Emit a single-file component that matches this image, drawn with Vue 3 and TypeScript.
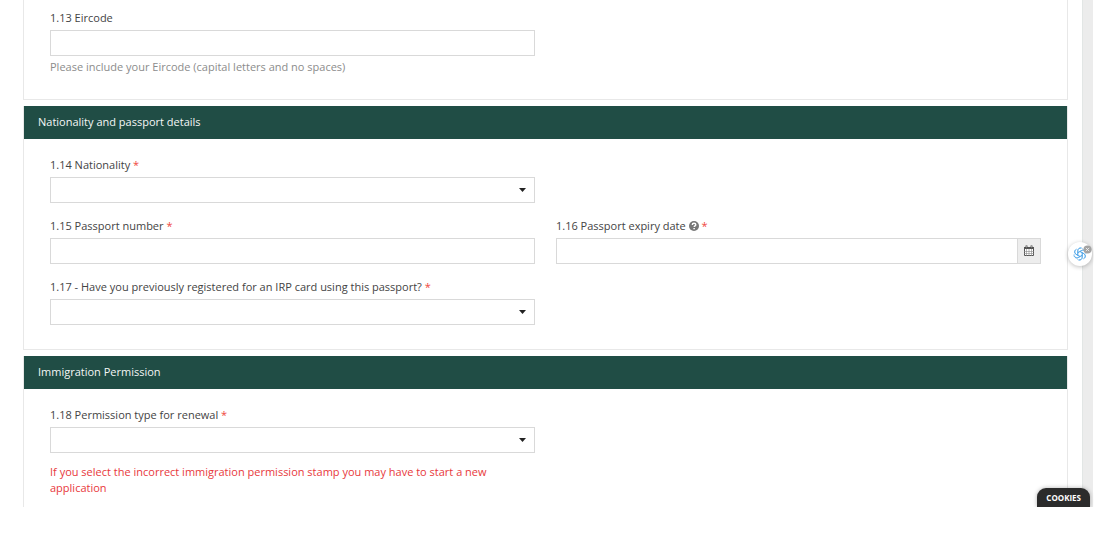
<script setup lang="ts">
import { ref } from 'vue'

const eircode = ref('')
const nationality = ref('')
const passportNumber = ref('')
const passportExpiry = ref('')
const registered = ref('')
const permission = ref('')
const petals: number[] = [0, 60, 120, 180, 240, 300]
</script>

<template>
  <div class="page">
    <main class="form">
      <section class="card first">
        <div class="grid">
          <div class="field">
            <label for="eircode">1.13 Eircode</label>
            <input id="eircode" v-model="eircode" class="control" type="text" aria-describedby="eircode-help" />
            <p id="eircode-help" class="help">Please include your Eircode (capital letters and no spaces)</p>
          </div>
        </div>
      </section>

      <section class="card">
        <h2>Nationality and passport details</h2>
        <div class="grid">
          <div class="field">
            <label for="nationality">1.14 Nationality <span class="req">*</span></label>
            <div class="select">
              <select id="nationality" v-model="nationality" class="control"><option value=""></option></select>
              <svg class="caret" viewBox="0 0 7 4" aria-hidden="true"><path d="M0 0h7L3.500 4z" /></svg>
            </div>
          </div>
          <div class="field start">
            <label for="passport">1.15 Passport number <span class="req">*</span></label>
            <input id="passport" v-model="passportNumber" class="control" type="text" />
          </div>
          <div class="field">
            <label for="expiry">1.16 Passport expiry date
              <svg class="hint" viewBox="0 0 16 16" aria-hidden="true">
                <circle cx="8" cy="8" r="8" fill="#777" />
                <path d="M5.2 6.2C5.2 4.4 6.4 3.600 8 3.600s2.900.9 2.900 2.400c0 1.800-2.600 1.900-2.600 3.600" fill="none" stroke="#fff" stroke-width="2.200" />
                <path d="M7 11h2.400v2.200H7z" fill="#fff" />
              </svg>
              <span class="req">*</span></label>
            <div class="date">
              <input id="expiry" v-model="passportExpiry" class="control" type="text" />
              <button type="button" class="calendar" aria-label="Choose date">
                <svg viewBox="0 0 12 12" aria-hidden="true">
                  <path d="M1.500 2.500h9v8h-9z" fill="#fff" stroke="#555" />
                  <path d="M1 2h10v2H1z" fill="#555" />
                  <path d="M3.500 4v7M6 4v7M8.500 4v7M1 6.500h10M1 8.500h10" fill="none" stroke="#888" stroke-width=".6" />
                  <path d="M3.500 .5v2.500M8.500 .5v2.500" stroke="#444" stroke-width="1.800" />
                  <path d="M3.500 1v1.500M8.500 1v1.500" stroke="#ddd" stroke-width=".6" />
                </svg>
              </button>
            </div>
          </div>
          <div class="field">
            <label for="registered">1.17 - Have you previously registered for an IRP card using this passport? <span class="req">*</span></label>
            <div class="select">
              <select id="registered" v-model="registered" class="control"><option value=""></option></select>
              <svg class="caret" viewBox="0 0 7 4" aria-hidden="true"><path d="M0 0h7L3.500 4z" /></svg>
            </div>
          </div>
        </div>
      </section>

      <section class="card last">
        <h2>Immigration Permission</h2>
        <div class="grid">
          <div class="field">
            <label for="permission">1.18 Permission type for renewal <span class="req">*</span></label>
            <div class="select">
              <select id="permission" v-model="permission" class="control"><option value=""></option></select>
              <svg class="caret" viewBox="0 0 7 4" aria-hidden="true"><path d="M0 0h7L3.500 4z" /></svg>
            </div>
            <p class="warning">If you select the incorrect immigration permission stamp you may have to start a new application</p>
          </div>
        </div>
      </section>
    </main>
    <div class="rail"></div>

    <button type="button" class="assistant" aria-label="Open assistant">
      <svg class="knot" viewBox="0 0 24 24" aria-hidden="true">
        <g fill="none" stroke="#4aa3e8" stroke-width="1.200">
          <path v-for="a in petals" :key="a" :transform="`rotate(${a} 12 12)`" d="M8.200 14.200V6.200C8.200 1.800 13.500-.2 16.500 3M8.200 9.800l6.500-3.800c3-1.600 6 .2 6.800 2.500" />
        </g>
      </svg>
      <svg class="close" viewBox="0 0 10 10" aria-hidden="true">
        <circle cx="5" cy="5" r="4.500" fill="#a3a3a3" />
        <path d="M3.200 3.200l3.600 3.600M6.800 3.200L3.200 6.800" stroke="#eee" stroke-width="1" />
      </svg>
    </button>
    <button type="button" class="cookies">COOKIES</button>
  </div>
</template>

<style>
body {
  margin: 0;
  background: #fff;
}
</style>

<style scoped>
* {
  box-sizing: border-box;
}
.page {
  position: relative;
  display: grid;
  grid-template-columns: 1fr 11px;
  padding-right: 1px;
  overflow: hidden;
  font: 11px/16px "Open Sans", sans-serif;
  color: #444;
}
.form {
  display: flex;
  flex-direction: column;
  gap: 6px;
  padding: 0 14px 0 23px;
}
.rail {
  background: #ececec;
  border-left: 1px solid #e2e6e5;
}
.card {
  border: 1px solid #e8e8e8;
  border-top: 0;
}
h2 {
  margin: 0;
  padding: 8px 14px 9px;
  background: #204d45;
  color: #f4f7f6;
  font: inherit;
}
.grid {
  display: grid;
  grid-template-columns: 1fr 1fr;
  gap: 15px 21px;
  padding: 18px 26px 24px;
}
.first .grid {
  padding-top: 10px;
}
.last {
  border-bottom: 0;
}
.last .grid {
  padding-bottom: 11px;
}
.start {
  grid-column: 1;
}
label {
  display: block;
  margin-bottom: 4px;
}
.req {
  color: #f0483e;
}
.control {
  display: block;
  width: 100%;
  height: 26px;
  margin: 0;
  padding: 0 10px;
  border: 1px solid #d9d9d9;
  border-radius: 0;
  background: #fff;
  font: inherit;
  color: inherit;
  appearance: none;
}
.help {
  margin: 3px 0 0;
  color: #8c8c8c;
}
.warning {
  margin: 11px 0 0;
  color: #e8383b;
}
.select {
  position: relative;
}
.caret {
  position: absolute;
  top: 11px;
  right: 9px;
  width: 7px;
  height: 4px;
  fill: #222;
  pointer-events: none;
}
.hint {
  width: 10px;
  height: 10px;
  margin-right: 3px;
  vertical-align: -1px;
}
.date {
  display: flex;
}
.calendar {
  display: grid;
  place-items: center;
  flex: none;
  width: 23px;
  padding: 0;
  border: 1px solid #d9d9d9;
  border-left: 0;
  background: #ededed;
}
.calendar svg {
  width: 12px;
  height: 12px;
}
.assistant {
  position: absolute;
  top: 242px;
  right: 2px;
  width: 24px;
  height: 24px;
  padding: 0;
  border: 0;
  border-radius: 50%;
  background: #fff;
  box-shadow: 0 1px 4px rgba(0, 0, 0, 0.25);
}
.knot {
  position: absolute;
  top: 5px;
  left: 5px;
  width: 14px;
  height: 14px;
}
.close {
  position: absolute;
  top: 3px;
  right: 0;
  width: 9px;
  height: 9px;
}
.cookies {
  position: absolute;
  right: 4px;
  bottom: 0;
  padding: 2px 9px 1px;
  border: 0;
  border-radius: 9px 9px 0 0;
  background: #2b2b2b;
  box-shadow: 0 0 4px rgba(0, 0, 0, 0.3);
  color: #fff;
  font: bold 8px/16px "Open Sans", sans-serif;
}
</style>
